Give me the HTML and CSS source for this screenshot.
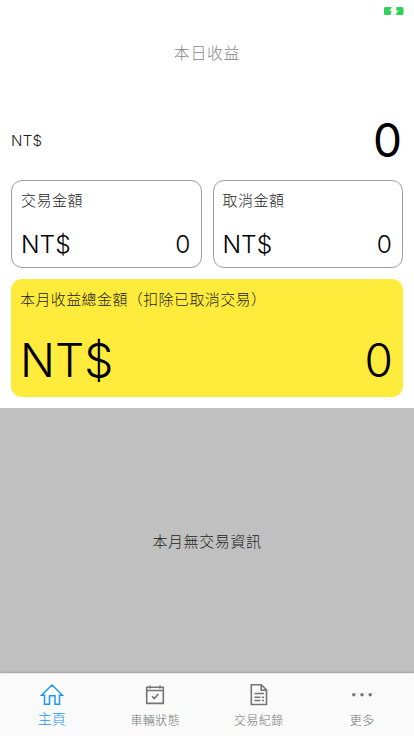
FILE: index.html
```html
<!DOCTYPE html>
<html lang="zh-Hant">

<head>
    <meta charset="UTF-8">
    <meta name="viewport" content="width=device-width, initial-scale=1.0">
    <title>本日收益</title>
    <link rel="stylesheet" href="styles.css">
</head>

<body>
    <div class="status-bar">
        <svg class="battery" width="22" height="10" viewBox="0 0 22 10">
            <path d="M2.500 1H9L6.500 5H8.500L7.500 9H2.500Q1 9 1 7.500V2.500Q1 1 2.500 1Z" fill="#30d158" />
            <path d="M13.500 1H19Q20.500 1 20.500 2.500V7.500Q20.500 9 19 9H12.500L15.500 4.500H13Z" fill="#30d158" />
        </svg>
    </div>

    <h1 class="title">本日收益</h1>

    <div class="today">
        <span class="today-currency">NT$</span>
        <span class="today-amount">0</span>
    </div>

    <div class="cards">
        <div class="card">
            <div class="card-title">交易金額</div>
            <div class="card-amount"><span>NT$</span><span>0</span></div>
        </div>
        <div class="card">
            <div class="card-title">取消金額</div>
            <div class="card-amount"><span>NT$</span><span>0</span></div>
        </div>
    </div>

    <div class="month">
        <div class="card-title">本月收益總金額（扣除已取消交易）</div>
        <div class="month-amount"><span>NT$</span><span>0</span></div>
    </div>

    <div class="chart-empty">本月無交易資訊</div>

    <nav class="tabs">
        <a class="tab active">
            <svg width="24" height="24" viewBox="0 0 24 24" fill="none" stroke="currentColor" stroke-width="1.5">
                <path d="M1.500 12.300 12 2l10.500 10.300H19.500V21.200H15V12.800H9.500V21.200H4.500V12.300Z" />
            </svg>
            <span>主頁</span>
        </a>
        <a class="tab">
            <svg width="24" height="24" viewBox="0 0 24 24" fill="none" stroke="currentColor" stroke-width="1.6">
                <path d="M3.700 4.200h16.600v16.200H3.700ZM3.700 7.500h16.600M7 2.500v3M17 2.500v3M9 13.200l2.200 2.300 4.200-4.500" />
            </svg>
            <span>車輛狀態</span>
        </a>
        <a class="tab">
            <svg width="24" height="24" viewBox="0 0 24 24" fill="none" stroke="currentColor" stroke-width="1.6">
                <path d="M4.300 1.800h10l5.200 5.300v14.400H4.300ZM14.200 2v5.300h5.300M7.500 10.500h9.500M7.500 14.300h6M15 14.300h2M7.500 17.500h6M15 17.500h2" />
            </svg>
            <span>交易紀錄</span>
        </a>
        <a class="tab">
            <svg width="24" height="24" viewBox="0 0 24 24" fill="currentColor">
                <circle cx="3.800" cy="11.800" r="1.700" />
                <circle cx="12" cy="11.800" r="1.700" />
                <circle cx="20.200" cy="11.800" r="1.700" />
            </svg>
            <span>更多</span>
        </a>
    </nav>
</body>

</html>
```
FILE: styles.css
```css
* {
    box-sizing: border-box;
}

body {
    margin: 0;
    height: 736px;
    display: flex;
    flex-direction: column;
    background-color: #fff;
    color: #222;
    font-family: Inter, "Noto Sans CJK TC", sans-serif;
    font-weight: 300;
    overflow: hidden;
}

.status-bar {
    height: 20px;
    padding: 6px 9px 0 0;
    text-align: right;
}

.battery {
    display: block;
    margin-left: auto;
}

.title {
    margin: 0;
    height: 66px;
    line-height: 66px;
    text-align: center;
    font-size: 16px;
    font-weight: 300;
    letter-spacing: 0.6px;
    color: #888;
}

.today {
    height: 94px;
    padding: 0 12px 0 11px;
    display: flex;
    justify-content: space-between;
    align-items: center;
}

.today-currency {
    padding-top: 15px;
    font-size: 15px;
    letter-spacing: 0.3px;
}

.today-amount {
    padding-top: 14px;
    line-height: 46px;
    font-size: 46px;
    font-weight: 400;
    color: #000;
}

.cards {
    display: flex;
    gap: 11px;
    padding: 0 11px;
}

.card {
    flex: 1;
    height: 88px;
    padding: 9px 10px 0 9px;
    border: 1px solid #9e9e9e;
    border-radius: 11px;
}

.card-title {
    height: 22px;
    line-height: 22px;
    font-size: 15px;
    letter-spacing: 0.5px;
}

.card-amount {
    display: flex;
    justify-content: space-between;
    margin-top: 17px;
    line-height: 30px;
    font-size: 24.5px;
    font-weight: 350;
    color: #000;
}

.month {
    height: 118px;
    margin: 11px 11px 11px;
    padding: 10px 10px 0 9px;
    border-radius: 11px;
    background-color: #ffeb3b;
}

.month .card-title {
    letter-spacing: 0.4px;
}

.month-amount {
    display: flex;
    justify-content: space-between;
    margin-top: 21px;
    line-height: 56px;
    font-size: 46px;
    font-weight: 350;
    color: #000;
}

.chart-empty {
    flex: 1;
    display: flex;
    justify-content: center;
    align-items: center;
    background-color: #c0c0c0;
    font-size: 15px;
    letter-spacing: 0.6px;
}

.tabs {
    display: flex;
    height: 63px;
    border-top: 1px solid #e8e8e8;
    box-shadow: 0 -1px 2px rgba(0, 0, 0, 0.15);
    background-color: #fafafa;
}

.tab {
    flex: 1;
    display: flex;
    flex-direction: column;
    align-items: center;
    padding-top: 9px;
    font-size: 12px;
    letter-spacing: 0.4px;
    color: #757575;
}

.tab span {
    margin-top: 5px;
    line-height: 18px;
}

.tab.active {
    font-size: 14px;
    letter-spacing: 0;
    color: #2196f3;
}

.tab.active span {
    margin-top: 3px;
}
```
